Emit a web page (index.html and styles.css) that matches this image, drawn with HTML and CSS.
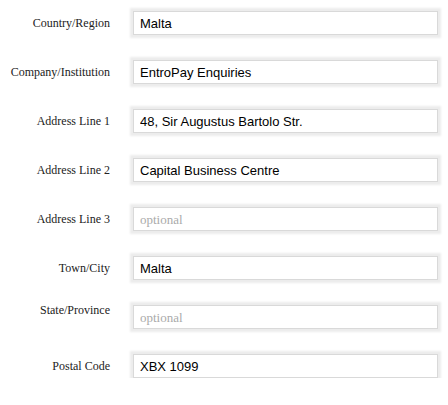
FILE: index.html
```html
<!DOCTYPE html>
<html lang="en">
<head>
  <meta charset="UTF-8" />
  <meta name="viewport" content="width=device-width, initial-scale=1" />
  <title>Address details</title>
  <link rel="stylesheet" href="styles.css">
</head>
<body>
<form class="address-form">
  <div class="form-row">
    <label for="country">Country/Region</label>
    <input id="country" type="text" value="Malta" />
  </div>
  <div class="form-row">
    <label for="company">Company/Institution</label>
    <input id="company" type="text" value="EntroPay Enquiries" />
  </div>
  <div class="form-row">
    <label for="addr1">Address Line 1</label>
    <input id="addr1" type="text" value="48, Sir Augustus Bartolo Str." />
  </div>
  <div class="form-row">
    <label for="addr2">Address Line 2</label>
    <input id="addr2" type="text" value="Capital Business Centre" />
  </div>
  <div class="form-row">
    <label for="addr3">Address Line 3</label>
    <input id="addr3" type="text" placeholder="optional" />
  </div>
  <div class="form-row">
    <label for="town">Town/City</label>
    <input id="town" type="text" value="Malta" />
  </div>
  <div class="form-row">
    <label for="state" class="label-top">State/Province</label>
    <input id="state" type="text" placeholder="optional" />
  </div>
  <div class="form-row">
    <label for="postcode">Postal Code</label>
    <input id="postcode" type="text" value="XBX 1099" />
  </div>
</form>
</body>
</html>
```

FILE: styles.css
```css
body {
  margin: 0;
  background: #fff;
  font-family: 'Liberation Serif', 'Times New Roman', serif;
  color: #222;
}
.address-form {
  padding-top: 11px;
  display: flex;
  flex-direction: column;
  gap: 25px;
}
.form-row {
  display: flex;
  align-items: center;
  gap: 23px;
}
.form-row label {
  width: 110px;
  flex-shrink: 0;
  text-align: right;
  font-size: 12px;
  color: #222;
}
.form-row label.label-top {
  align-self: flex-start;
  margin-top: -2px;
}
.form-row input {
  box-sizing: border-box;
  width: 305px;
  height: 24px;
  margin: 0;
  padding: 0 6px;
  border: 1px solid #d9d9d9;
  box-shadow: 0 0 2px 3px #ececec;
  background: #fff;
  font-family: 'Liberation Sans', Arial, sans-serif;
  font-size: 13px;
  color: #000;
  outline: none;
}
.form-row input::placeholder {
  font-family: 'Liberation Serif', 'Times New Roman', serif;
  font-size: 13px;
  color: #aaa;
}
```
